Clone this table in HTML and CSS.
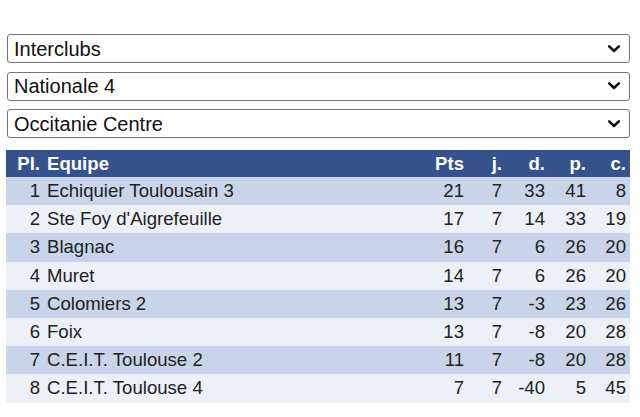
FILE: index.html
```html
<!DOCTYPE html>
<html lang="fr">
<head>
<meta charset="utf-8">
<title>Classement</title>
<link rel="stylesheet" href="styles.css">
</head>
<body>
<div class="page">
  <div class="filters">
    <select class="sel"><option>Interclubs</option></select>
    <select class="sel"><option>Nationale 4</option></select>
    <select class="sel"><option>Occitanie Centre</option></select>
  </div>
  <table class="standings">
    <thead>
      <tr><th class="pl">Pl.</th><th class="team">Equipe</th><th class="num pts">Pts</th><th class="num j">j.</th><th class="num d">d.</th><th class="num p">p.</th><th class="num c">c.</th></tr>
    </thead>
    <tbody>
      <tr><td class="pl">1</td><td class="team">Echiquier Toulousain 3</td><td class="num">21</td><td class="num">7</td><td class="num">33</td><td class="num">41</td><td class="num">8</td></tr>
      <tr><td class="pl">2</td><td class="team">Ste Foy d'Aigrefeuille</td><td class="num">17</td><td class="num">7</td><td class="num">14</td><td class="num">33</td><td class="num">19</td></tr>
      <tr><td class="pl">3</td><td class="team">Blagnac</td><td class="num">16</td><td class="num">7</td><td class="num">6</td><td class="num">26</td><td class="num">20</td></tr>
      <tr><td class="pl">4</td><td class="team">Muret</td><td class="num">14</td><td class="num">7</td><td class="num">6</td><td class="num">26</td><td class="num">20</td></tr>
      <tr><td class="pl">5</td><td class="team">Colomiers 2</td><td class="num">13</td><td class="num">7</td><td class="num">-3</td><td class="num">23</td><td class="num">26</td></tr>
      <tr><td class="pl">6</td><td class="team">Foix</td><td class="num">13</td><td class="num">7</td><td class="num">-8</td><td class="num">20</td><td class="num">28</td></tr>
      <tr><td class="pl">7</td><td class="team">C.E.I.T. Toulouse 2</td><td class="num">11</td><td class="num">7</td><td class="num">-8</td><td class="num">20</td><td class="num">28</td></tr>
      <tr><td class="pl">8</td><td class="team">C.E.I.T. Toulouse 4</td><td class="num">7</td><td class="num">7</td><td class="num">-40</td><td class="num">5</td><td class="num">45</td></tr>
    </tbody>
  </table>
  <p class="links"><a href="#">Calendrier</a> · <a href="#">Résultats</a> · <a href="#">Grille</a> · <a href="#">Joueurs</a> · <a href="#">Statistiques</a></p>
</div>
</body>
</html>
```

FILE: styles.css
```css
html, body {
  margin: 0;
  padding: 0;
  background: #ffffff;
}

.page {
  padding: 34px 10px 0 6px;
  font-family: "Liberation Sans", Arial, sans-serif;
  color: #222;
}

.filters {
  display: flex;
  flex-direction: column;
  gap: 8.5px;
  padding-left: 1px;
}

.sel {
  -webkit-appearance: none;
  appearance: none;
  width: 623px;
  height: 29px;
  box-sizing: border-box;
  font-family: "Liberation Sans", Arial, sans-serif;
  font-size: 20px;
  color: #111;
  background-color: #fff;
  background-image: url("data:image/svg+xml;utf8,<svg xmlns='http://www.w3.org/2000/svg' width='12' height='8' viewBox='0 0 12 8'><path d='M1.2 1.4 L6 6 L10.8 1.4' fill='none' stroke='%23111' stroke-width='2.6' stroke-linecap='round' stroke-linejoin='round'/></svg>");
  background-repeat: no-repeat;
  background-position: right 9px center;
  background-size: 12px 8px;
  border: 1px solid #767676;
  border-radius: 3px;
  padding: 0 28px 0 6px;
}

.standings {
  margin-top: 12px;
  width: 624px;
  border-collapse: collapse;
  font-size: 18.6px;
}

.standings th,
.standings td {
  padding: 0 4px 0 3px;
  white-space: nowrap;
}

.standings thead tr {
  background: #36528c;
  color: #fff;
  height: 27px;
}

.standings th {
  font-weight: bold;
  text-align: left;
}

.standings tbody tr {
  height: 28.2px;
}

.standings tbody tr:nth-child(odd) {
  background: #c7d4e9;
}

.standings tbody tr:nth-child(even) {
  background: #edf0f7;
}

.standings .pl {
  text-align: right;
  width: 23px;
  padding-left: 11px;
}

.standings .team {
  text-align: left;
}

.standings .num {
  text-align: right;
}

.standings .pts { width: 33px; }
.standings .j { width: 31px; }
.standings .d { width: 36px; }
.standings .p { width: 34px; }
.standings .c { width: 33px; }

.links {
  margin: 13px 0 0;
  text-align: center;
  font-size: 16px;
  line-height: 18px;
}

.links a {
  color: #3556a0;
  text-decoration: none;
}
```
